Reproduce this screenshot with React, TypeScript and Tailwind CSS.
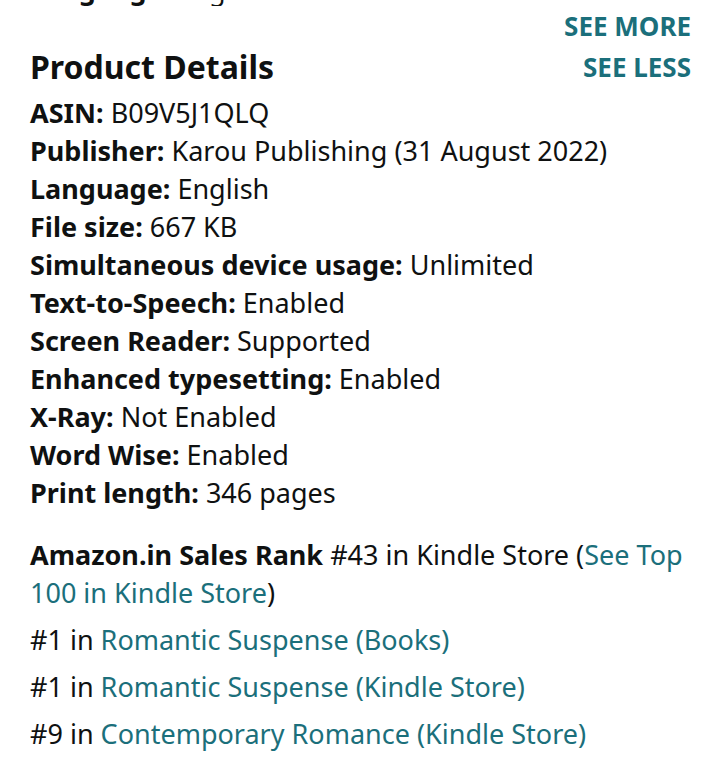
const details: [string, string][] = [
  ["ASIN:", "B09V5J1QLQ"],
  ["Publisher:", "Karou Publishing (31 August 2022)"],
  ["Language:", "English"],
  ["File size:", "667 KB"],
  ["Simultaneous device usage:", "Unlimited"],
  ["Text-to-Speech:", "Enabled"],
  ["Screen Reader:", "Supported"],
  ["Enhanced typesetting:", "Enabled"],
  ["X-Ray:", "Not Enabled"],
  ["Word Wise:", "Enabled"],
  ["Print length:", "346 pages"],
];

const ranks = [
  ["#1", "Romantic Suspense (Books)"],
  ["#1", "Romantic Suspense (Kindle Store)"],
  ["#9", "Contemporary Romance (Kindle Store)"],
];

export default function App() {
  return (
    <div className="w-[720px] h-[762px] overflow-hidden bg-white px-[30px] text-[#0f1111] font-['Noto_Sans',sans-serif]">
      {/* tail of the section above, cut off by the screen edge */}
      <div className="h-[6px] overflow-hidden">
        <div className="-mt-[29px] text-[27px] leading-[38px]">
          <span className="font-bold">Language:</span> English
        </div>
      </div>

      {/* header */}
      <div className="flex items-end justify-between">
        <h2 className="text-[32px] font-bold leading-[40px] mb-[1px]">Product Details</h2>
        <div className="flex flex-col items-end text-[26px] font-bold leading-[41px] text-[#1b6f7b] -mr-[1px]">
          <span>SEE MORE</span>
          <span>SEE LESS</span>
        </div>
      </div>

      {/* details list */}
      <ul className="mt-[6px] text-[27px] leading-[38px]">
        {details.map(([label, value]) => (
          <li key={label}>
            <span className="font-bold">{label}</span> {value}
          </li>
        ))}
      </ul>

      {/* sales rank */}
      <div className="mt-[24px] text-[27px]">
        <p className="leading-[38px]">
          <span className="font-bold">Amazon.in Sales Rank</span> #43 in Kindle Store (
          <a className="text-[#1b6f7b]">See Top 100 in Kindle Store</a>)
        </p>
        <div className="mt-[9px] flex flex-col gap-[9px]">
          {ranks.map(([n, cat]) => (
            <p key={cat} className="leading-[38px]">
              {n} in <a className="text-[#1b6f7b]">{cat}</a>
            </p>
          ))}
        </div>
      </div>
    </div>
  );
}
